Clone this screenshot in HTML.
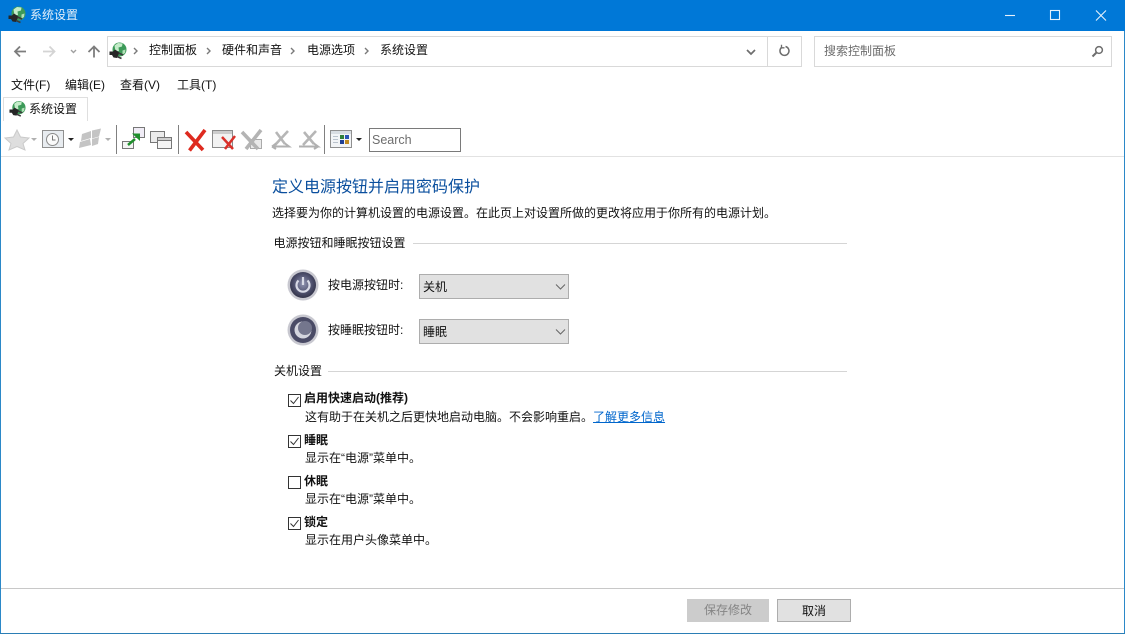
<!DOCTYPE html>
<html lang="zh"><head><meta charset="utf-8"><title>系统设置</title>
<style>
html,body{margin:0;padding:0;width:1125px;height:634px;overflow:hidden;background:#fff}
body{position:relative;font:12px/16px "Liberation Sans","Noto Sans CJK SC",sans-serif;color:#111}
.t{position:absolute;white-space:nowrap;height:16px;line-height:16px}
.b{position:absolute;box-sizing:border-box}
svg{position:absolute;overflow:visible}
.bold{font-weight:700}
</style></head><body>
<svg width="0" height="0" style="position:absolute"><defs>
<symbol id="plug" viewBox="0 0 18 18">
<circle cx="10.500" cy="7.500" r="7" fill="#3c9a58"/>
<path d="M5.500 3.500l3.500-2.500 4.500.5-.5 3-3.500 1 .5 3.500-3.500.5z" fill="#c4ecc9"/>
<path d="M13.500 8.500l3-1-.5 3.500-2.500 1.500z" fill="#b4e0b8"/>
<path d="M.5 9.500l3.500 0 2-2 4.500 3-2.500 5.500-3.500-.5-1.500-2.500-2.500 0z" fill="#262626"/>
<path d="M9.500 11l4.500 2M8 14.500l4.500 2" stroke="#3a3a3a" stroke-width="1.600"/>
</symbol>
<radialGradient id="g" cx="50%" cy="45%" r="55%"><stop offset="0" stop-color="#9094b2"/><stop offset=".65" stop-color="#4d4f6c"/><stop offset="1" stop-color="#33344a"/></radialGradient>
</defs></svg>

<!-- title bar -->
<div class="b" style="left:0;top:0;width:1125px;height:31px;background:#0078d7"></div>
<svg style="left:8px;top:6px" width="18" height="18"><use href="#plug" width="18" height="18"/></svg>
<div class="t" style="left:30px;top:7px;color:#e4f0fa">系统设置</div>
<svg style="left:1000px;top:5px" width="120" height="20" fill="none" stroke="#e6f1fb" stroke-width="1.100">
<path d="M5 10.500h10"/><rect x="50.500" y="5.500" width="9" height="9"/><path d="M96 5.500l10 10M106 5.500l-10 10"/>
</svg>

<!-- window borders -->
<div class="b" style="left:0;top:31px;width:1px;height:603px;background:#2b88c8"></div>
<div class="b" style="left:1124px;top:31px;width:1px;height:603px;background:#2b88c8"></div>
<div class="b" style="left:0;top:633px;width:1125px;height:1px;background:#2b7eb5"></div>

<!-- nav -->
<svg style="left:12px;top:41px" width="90" height="20" fill="none" stroke-width="1.800">
<path d="M3 10.500h11M8 5.500l-5 5 5 5" stroke="#7d7d7d"/>
<path d="M31 10.500h11M37.500 5.500l5 5-5 5" stroke="#d4d4d4"/>
<path d="M59 9l2.500 2.500 2.500-2.500" stroke="#a0a0a0" stroke-width="1.400"/>
<path d="M82 16.500V5.500M76.500 11l5.500-5.500 5.500 5.500" stroke="#7d7d7d"/>
</svg>
<div class="b" style="left:107px;top:36px;width:695px;height:31px;border:1px solid #d9d9d9"></div>
<div class="b" style="left:767px;top:36px;width:1px;height:31px;background:#d9d9d9"></div>
<svg style="left:109px;top:42px" width="18" height="18"><use href="#plug" width="18" height="18"/></svg>
<svg style="left:130px;top:45px" width="240" height="12" fill="none" stroke="#7a7a7a" stroke-width="1.400">
<path d="M4 3l3 3-3 3M77 3l3 3-3 3M161 3l3 3-3 3M235 3l3 3-3 3"/>
</svg>
<div class="t" style="left:149px;top:42px">控制面板</div>
<div class="t" style="left:222px;top:42px">硬件和声音</div>
<div class="t" style="left:307px;top:42px">电源选项</div>
<div class="t" style="left:380px;top:42px">系统设置</div>
<svg style="left:745px;top:47px" width="12" height="10" fill="none" stroke="#6e6e6e" stroke-width="1.700"><path d="M2 3l4 4 4-4"/></svg>
<svg style="left:778px;top:44px" width="14" height="14" fill="none" stroke="#6e6e6e" stroke-width="1.500"><path d="M3.500 3.500a4.500 4.500 0 1 0 4-1"/><path d="M3.500 .8v3h3" stroke-width="1.300"/></svg>
<div class="b" style="left:814px;top:36px;width:298px;height:31px;border:1px solid #d9d9d9"></div>
<div class="t" style="left:824px;top:43px;color:#6c6c6c">搜索控制面板</div>
<svg style="left:1091px;top:45px" width="13" height="13" fill="none" stroke="#6e6e6e"><circle cx="8" cy="5" r="3.400" stroke-width="1.500"/><path d="M5.500 7.500L1.500 11.500" stroke-width="2"/></svg>

<!-- menu -->
<div class="t" style="left:11px;top:77px">文件(F)</div>
<div class="t" style="left:65px;top:77px">编辑(E)</div>
<div class="t" style="left:120px;top:77px">查看(V)</div>
<div class="t" style="left:177px;top:77px">工具(T)</div>

<!-- tab -->
<div class="b" style="left:3px;top:97px;width:85px;height:24px;border:1px solid #dfdfdf;border-bottom:0"></div>
<svg style="left:9px;top:100px" width="17" height="18"><use href="#plug" width="17" height="18"/></svg>
<div class="t" style="left:29px;top:101px">系统设置</div>

<!-- toolbar -->
<svg style="left:0;top:124px" width="470" height="32">
<path d="M17 6l3.500 7 8.500 1-6 5.500 2 6.500-8-3.500-8 3.500 2-6.500-6-5.500 8.500-1z" fill="#dedede" stroke="#cacaca"/>
<path d="M31 14h6l-3 3z" fill="#b0b0b0"/>
<rect x="42.500" y="6.500" width="21" height="17" fill="#e8ecf0" stroke="#8f8f8f"/>
<circle cx="52.500" cy="15.500" r="6" fill="#fafafa" stroke="#8a8a8a"/>
<path d="M52.500 11.500v4.500h3" fill="none" stroke="#777"/>
<path d="M68 14h6l-3 3z" fill="#222"/>
<path d="M82 10l9-3 0 7-10 3zM92 6.500l9-2-2 8-7 2zM80 18l10-3 1 6-12 3zM92 15l7-2-1 7-6 2z" fill="#c4c4c4"/>
<path d="M105 14h6l-3 3z" fill="#b0b0b0"/>
<rect x="116" y="1" width="1" height="29" fill="#808080"/>
<rect x="122.500" y="17.500" width="11" height="7" fill="#f4f4f4" stroke="#777"/>
<rect x="133.500" y="3.500" width="11" height="10" fill="#f0ecf6" stroke="#777"/>
<path d="M128 21l7-6" stroke="#1f8f2c" stroke-width="2.500" fill="none"/><path d="M132 9.500h8v7.500z" fill="#1f8f2c"/>
<rect x="150.500" y="7.500" width="14" height="11" fill="#ebebeb" stroke="#777"/>
<rect x="157.500" y="13.500" width="14" height="11" fill="#f4f4f4" stroke="#777"/>
<rect x="157.500" y="13.500" width="14" height="3" fill="#cfcfcf" stroke="#777"/>
<rect x="178" y="1" width="1" height="29" fill="#808080"/>
<path d="M186 8L203 26M205 6L189.500 26.500" fill="none" stroke="#de2a1f" stroke-width="3.600"/>
<rect x="212.500" y="6.500" width="20" height="17" fill="#f2f2f2" stroke="#8a8a8a"/>
<rect x="213" y="7" width="19" height="3" fill="#cccccc"/>
<path d="M222 13L233 25M235 12L225 25" fill="none" stroke="#d9302a" stroke-width="2.500"/>
<rect x="250.500" y="15.500" width="11" height="9" fill="#eaeaea" stroke="#aaa"/>
<path d="M242 8L258 25M261 6L246 25" fill="none" stroke="#b4b4b4" stroke-width="3.600"/>
<path d="M276 8l9 12M288 7l-13 14" fill="none" stroke="#b6b6b6" stroke-width="2.600"/>
<path d="M272 22.500h17l-4-3M272 22.500l4-3M272 22.500l4 2.500" fill="none" stroke="#b0b0b0" stroke-width="2"/>
<path d="M304 8l10 12M316 7l-13 14" fill="none" stroke="#b6b6b6" stroke-width="2.600"/>
<path d="M299 22.500h19l-4-3M318 22.500l-4 2.500" fill="none" stroke="#b0b0b0" stroke-width="2"/>
<rect x="324" y="1" width="1" height="29" fill="#808080"/>
<rect x="330.500" y="6.500" width="21" height="17" fill="#f2f4f6" stroke="#8f8f8f"/>
<rect x="331" y="7" width="20" height="3" fill="#d8dde2"/>
<path d="M333 12h5v1h-5zM333 15h5v1h-5zM333 18h5v1h-5z" fill="#b9c2cc"/>
<rect x="340" y="11" width="4" height="4" fill="#2f7f3a"/><rect x="345" y="11" width="4" height="4" fill="#2a55b5"/>
<rect x="340" y="16" width="4" height="4" fill="#1f3f95"/><rect x="345" y="16" width="4" height="4" fill="#c08a20"/>
<path d="M356 14h6l-3 3z" fill="#222"/>
</svg>
<div class="b" style="left:369px;top:128px;width:92px;height:24px;border:1px solid #7a7a7a"></div>
<div class="t" style="left:372px;top:132px;color:#6d6d6d;font-size:12.500px;">Search</div>
<div class="b" style="left:1px;top:156px;width:1123px;height:1px;background:#e2e2e2"></div>

<!-- content -->
<div class="t" style="left:272px;top:178px;font-size:16px;height:20px;line-height:20px;color:#0a4f9e">定义电源按钮并启用密码保护</div>
<div class="t" style="left:272px;top:205px">选择要为你的计算机设置的电源设置。在此页上对设置所做的更改将应用于你所有的电源计划。</div>

<div class="t" style="left:273.500px;top:235px">电源按钮和睡眠按钮设置</div>
<div class="b" style="left:413px;top:243px;width:434px;height:1px;background:#d5d5d5"></div>

<svg style="left:287px;top:269px" width="32" height="32">
<circle cx="16" cy="16" r="15.500" fill="#c8c8d0"/><circle cx="16" cy="16" r="13" fill="url(#g)"/>
<path d="M11.500 11.500a6.500 6.500 0 1 0 9 0" fill="none" stroke="#d8dae6" stroke-width="2.200"/><path d="M16 8v8" stroke="#d8dae6" stroke-width="2.200"/>
</svg>
<svg style="left:287px;top:314px" width="32" height="32">
<circle cx="16" cy="16" r="15.500" fill="#c8c8d0"/><circle cx="16" cy="16" r="13" fill="#4a4b66"/>
<circle cx="16" cy="16" r="8.500" fill="#d4d5de"/><circle cx="18" cy="14" r="7" fill="#74768d"/>
</svg>
<div class="t" style="left:328px;top:277px">按电源按钮时:</div>
<div class="t" style="left:328px;top:322px">按睡眠按钮时:</div>
<div class="b" style="left:419px;top:274px;width:150px;height:25px;background:#e1e1e1;border:1px solid #adadad"></div>
<div class="b" style="left:419px;top:319px;width:150px;height:25px;background:#e1e1e1;border:1px solid #adadad"></div>
<div class="t" style="left:423px;top:279px">关机</div>
<div class="t" style="left:423px;top:324px">睡眠</div>
<svg style="left:555px;top:283px" width="12" height="8" fill="none" stroke="#666"><path d="M1 1.500l4.500 4.500L10 1.500"/></svg>
<svg style="left:555px;top:328px" width="12" height="8" fill="none" stroke="#666"><path d="M1 1.500l4.500 4.500L10 1.500"/></svg>

<div class="t" style="left:274px;top:363px">关机设置</div>
<div class="b" style="left:328px;top:371px;width:519px;height:1px;background:#d5d5d5"></div>

<svg style="left:288px;top:394px" width="13" height="13" fill="#fff" stroke="#333"><rect x=".5" y=".5" width="12" height="12"/><path d="M2.500 6.500l3 3 5-6.500" fill="none"/></svg>
<svg style="left:288px;top:435px" width="13" height="13" fill="#fff" stroke="#333"><rect x=".5" y=".5" width="12" height="12"/><path d="M2.500 6.500l3 3 5-6.500" fill="none"/></svg>
<svg style="left:288px;top:476px" width="13" height="13" fill="#fff" stroke="#333"><rect x=".5" y=".5" width="12" height="12"/></svg>
<svg style="left:288px;top:517px" width="13" height="13" fill="#fff" stroke="#333"><rect x=".5" y=".5" width="12" height="12"/><path d="M2.500 6.500l3 3 5-6.500" fill="none"/></svg>

<div class="t bold" style="left:304px;top:390px">启用快速启动(推荐)</div>
<div class="t" style="left:305px;top:409px">这有助于在关机之后更快地启动电脑。不会影响重启。<span style="color:#0066cc;text-decoration:underline">了解更多信息</span></div>
<div class="t bold" style="left:304px;top:432px">睡眠</div>
<div class="t" style="left:305px;top:450px">显示在“电源”菜单中。</div>
<div class="t bold" style="left:304px;top:473px">休眠</div>
<div class="t" style="left:305px;top:491px">显示在“电源”菜单中。</div>
<div class="t bold" style="left:304px;top:514px">锁定</div>
<div class="t" style="left:305px;top:532px">显示在用户头像菜单中。</div>

<!-- footer -->
<div class="b" style="left:1px;top:588px;width:1123px;height:1px;background:#c8c8c8"></div>
<div class="b" style="left:687px;top:599px;width:82px;height:23px;background:#cccccc;text-align:center;line-height:23px;color:#858585">保存修改</div>
<div class="b" style="left:777px;top:599px;width:74px;height:23px;background:#e1e1e1;border:1px solid #adadad;text-align:center;line-height:22px;color:#111">取消</div>
</body></html>
